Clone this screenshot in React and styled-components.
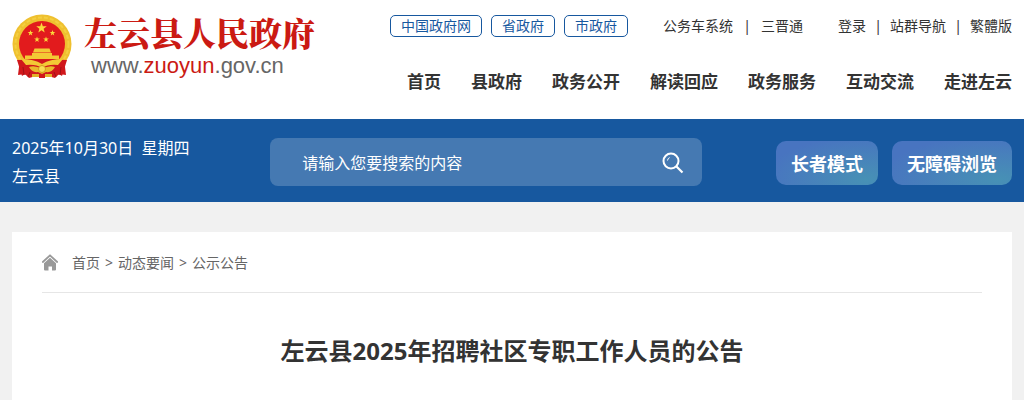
import React from 'react'
import styled, { createGlobalStyle } from 'styled-components'

const portals = ['中国政府网', '省政府', '市政府']
const systems = ['公务车系统', '三晋通']
const account = ['登录', '站群导航', '繁體版']
const menu = ['首页', '县政府', '政务公开', '解读回应', '政务服务', '互动交流', '走进左云']
const crumbs = ['首页', '动态要闻', '公示公告']

const STAR = 'M0 -5 L1.2 -1.6 L4.8 -1.5 L1.9 .6 L2.9 4 L0 2 L-2.9 4 L-1.9 .6 L-4.8 -1.5 L-1.2 -1.6Z'

const Emblem = () => (
  <svg width="60" height="65" viewBox="0 0 60 65" aria-hidden="true">
    <path d="M8 45 L16 51 44 51 52 45 54 61 47 60 43 64 36 62 30 64 24 62 17 64 13 60 6 61Z" fill="#d0171b" />
    <circle cx="30" cy="30" r="29.5" fill="#efc02f" />
    <circle cx="30" cy="30" r="26.5" fill="none" stroke="#f4cf40" strokeWidth="2" strokeDasharray="4 2" />
    <circle cx="30" cy="30" r="23" fill="#e21b1d" />
    <path d={STAR} transform="translate(29.5 14) scale(1.1)" fill="#fbd93b" />
    <path d={STAR} transform="translate(18.5 19) scale(.6)" fill="#fbd93b" />
    <path d={STAR} transform="translate(40.5 19) scale(.6)" fill="#fbd93b" />
    <path d={STAR} transform="translate(25 25.5) scale(.6)" fill="#fbd93b" />
    <path d={STAR} transform="translate(34 25.5) scale(.6)" fill="#fbd93b" />
    <path d="M22.5 34.5h15l1.5 4h-18zM20 39h20v2.5h7v3.5H13v-3.5h7z" fill="#f3c935" />
    <path d="M5 46 Q30 45 55 46 L50 62 Q47 59 44 62 L16 62 Q13 59 10 62Z" fill="#d0171b" />
    <path d="M9 45 Q22 45 30 50 Q38 45 51 45 L46 51 Q36 50 30 54 Q24 50 14 51Z" fill="#f3c935" />
    <path d="M17 53 Q23 51 30 55 Q37 51 43 53 Q40 59 34 58 L30 60 26 58 Q20 59 17 53Z" fill="#e9b92d" />
    <circle cx="30" cy="55" r="3.5" fill="#f9dc58" stroke="#d29c1c" />
    <path d="M11 53l1 8M49 53l-1 8M18 58l-2 5M42 58l2 5" stroke="#a01216" />
    <path d="M20 60h20v3H20z" fill="#e3b129" />
    <path d="M27 60h6v4h-6z" fill="#d0171b" />
  </svg>
)

const SearchIcon = () => (
  <svg width="22" height="22" viewBox="0 0 22 22" fill="none" stroke="#fff" aria-hidden="true">
    <circle cx="9" cy="9" r="7.5" strokeWidth="2" />
    <path d="M5.5 8.5 Q5.8 6.2 7.6 5.6" />
    <path d="M14.5 14.5 L20.5 20.5" strokeWidth="2.2" />
  </svg>
)

const HomeIcon = () => (
  <svg width="16" height="17" viewBox="0 0 16 17" aria-hidden="true">
    <path d="M.8 8 L8 1.3 L15.2 8" fill="none" stroke="#999" strokeWidth="1.8" strokeLinecap="round" strokeLinejoin="round" />
    <path d="M8 3.8 L14 9.2 V15.5 Q14 16.5 13 16.5 H10 V12.6 H6.5 V16.5 H3 Q2 16.5 2 15.5 V9.2Z" fill="#999" />
  </svg>
)

const LinkGroup = ({ items, $gap }) => (
  <Links $gap={$gap}>
    {items.map((item, i) => (
      <React.Fragment key={item}>
        {i > 0 && <span>|</span>}
        <a href="#">{item}</a>
      </React.Fragment>
    ))}
  </Links>
)

const App = () => {
  return (
    <>
      <GlobalStyle />
      <Header>
        <Logo href="#">
          <Emblem />
          <LogoText>
            <SiteName>左云县人民政府</SiteName>
            <Domain>www.<b>zuoyun</b>.gov.cn</Domain>
          </LogoText>
        </Logo>
        <HeaderRight>
          <TopLine>
            <Portals>
              {portals.map(name => <Portal href="#" key={name}>{name}</Portal>)}
            </Portals>
            <LinkGroup items={systems} $gap="10px" />
            <LinkGroup items={account} $gap="8px" />
          </TopLine>
          <Menu>
            {menu.map(name => <a href="#" key={name}>{name}</a>)}
          </Menu>
        </HeaderRight>
      </Header>
      <Banner>
        <Today>
          <p>2025年10月30日&nbsp; 星期四</p>
          <p>左云县</p>
        </Today>
        <Search onSubmit={e => e.preventDefault()}>
          <SearchInput type="text" aria-label="搜索" placeholder="请输入您要搜索的内容" />
          <SearchButton type="submit" aria-label="搜索"><SearchIcon /></SearchButton>
        </Search>
        <Modes>
          <ModeButton type="button">长者模式</ModeButton>
          <ModeButton type="button">无障碍浏览</ModeButton>
        </Modes>
      </Banner>
      <Content>
        <Crumbs>
          <HomeIcon />
          <CrumbList>
            {crumbs.map((name, i) => (
              <React.Fragment key={name}>
                {i > 0 && <span>&gt;</span>}
                <a href="#">{name}</a>
              </React.Fragment>
            ))}
          </CrumbList>
        </Crumbs>
        <Title>左云县2025年招聘社区专职工作人员的公告</Title>
      </Content>
    </>
  )
}

export default App

const GlobalStyle = createGlobalStyle`
  * {
    box-sizing: border-box;
  }
  body {
    margin: 0;
    background: #f1f1f1;
    color: #333;
    font-family: "Noto Sans", "Noto Sans CJK SC", sans-serif;
    font-size: 14px;
  }
  p, h1 {
    margin: 0;
  }
  a {
    color: inherit;
    text-decoration: none;
  }
`

const Header = styled.header`
  display: flex;
  justify-content: space-between;
  min-height: 119px;
  padding: 14px 12px 0;
  background: #fff;
`

const Logo = styled.a`
  display: flex;
  align-items: flex-start;
  gap: 12px;
`

const LogoText = styled.span`
  display: flex;
  flex-direction: column;
`

const SiteName = styled.span`
  color: #cb1a13;
  font-family: "Noto Serif CJK SC", "Noto Sans CJK SC", serif;
  font-size: 33px;
  font-weight: 900;
  line-height: 36px;
  white-space: nowrap;
`

const Domain = styled.span`
  padding-left: 7px;
  color: #666;
  font-family: "Liberation Sans", sans-serif;
  font-size: 22px;
  line-height: 32px;

  b {
    color: #cb1a13;
    font-weight: 400;
  }
`

const HeaderRight = styled.div`
  display: flex;
  flex-direction: column;
  align-items: flex-end;
  gap: 32px;
  white-space: nowrap;
`

const TopLine = styled.div`
  display: flex;
  align-items: center;
  gap: 35px;
  line-height: 24px;
`

const Portals = styled.div`
  display: flex;
  gap: 9px;
`

const Portal = styled.a`
  padding: 0 10px;
  border: 1px solid #17589f;
  border-radius: 5px;
  color: #17589f;
  line-height: 20px;
`

const Links = styled.div`
  display: flex;
  gap: ${props => props.$gap};

  span {
    width: 8px;
    text-align: center;
  }
`

const Menu = styled.nav`
  display: flex;
  gap: 30px;
  font-size: 17px;
  font-weight: 700;
  line-height: 24px;
`

const Banner = styled.section`
  display: grid;
  grid-template-columns: 5fr 432px 6fr;
  align-items: center;
  padding: 15px 12px 12px;
  background: #17589f;
  color: #fff;
`

const Today = styled.div`
  font-size: 16px;
  line-height: 28px;
`

const Search = styled.form`
  display: flex;
  align-items: center;
  height: 48px;
  padding: 2px 14px 0 32px;
  border-radius: 8px;
  background: rgba(255, 255, 255, 0.2);
`

const SearchInput = styled.input`
  flex: 1;
  min-width: 0;
  padding: 0;
  border: none;
  outline: none;
  background: none;
  color: #fff;
  font: inherit;
  font-size: 16px;

  &::placeholder {
    color: #fff;
    opacity: 1;
  }
`

const SearchButton = styled.button`
  display: flex;
  padding: 4px;
  border: none;
  background: none;
`

const Modes = styled.div`
  display: flex;
  justify-content: flex-end;
  gap: 14px;
  padding-top: 2px;
`

const ModeButton = styled.button`
  height: 44px;
  padding: 0 15px;
  border: none;
  border-radius: 10px;
  background: radial-gradient(ellipse at 88% 88%, #4791b5, #4874c0 80%);
  color: #fff;
  font: inherit;
  font-size: 18px;
  font-weight: 700;
  white-space: nowrap;
`

const Content = styled.main`
  margin: 30px 12px 0;
  padding: 0 30px 32px;
  background: #fff;
`

const Crumbs = styled.nav`
  display: flex;
  align-items: center;
  gap: 14px;
  height: 61px;
  border-bottom: 1px solid #e6e6e6;
  color: #666;
`

const CrumbList = styled.div`
  display: flex;
  align-items: baseline;
  gap: 5px;
`

const Title = styled.h1`
  padding-top: 39px;
  font-size: 24px;
  line-height: 37px;
  text-align: center;
`
